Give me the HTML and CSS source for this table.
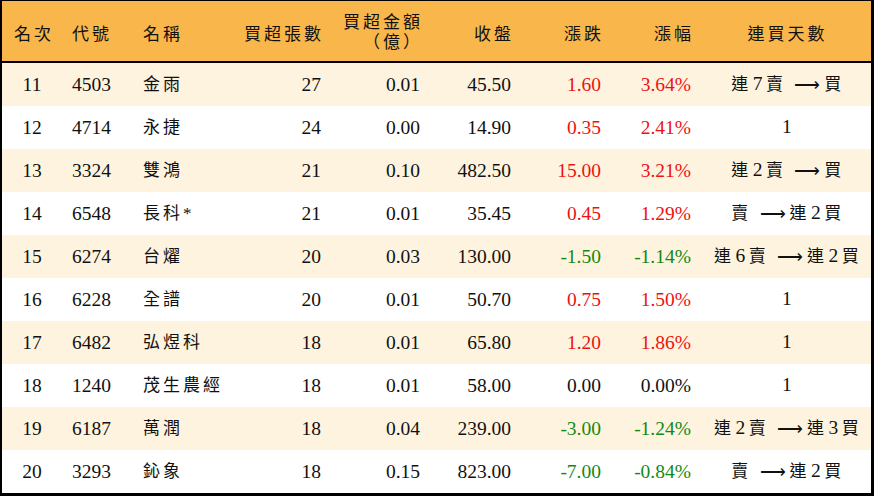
FILE: index.html
```html
<!DOCTYPE html>
<html lang="zh-Hant">
<head>
<meta charset="utf-8">
<title>買超排行</title>
<link rel="stylesheet" href="styles.css">
</head>
<body>
<div class="board">
  <table class="rank">
    <colgroup>
      <col class="w-rank"><col class="w-code"><col class="w-name"><col class="w-vol"><col class="w-amt">
      <col class="w-close"><col class="w-chg"><col class="w-pct"><col class="w-streak">
    </colgroup>
    <thead>
      <tr>
        <th class="h-rank">名次</th>
        <th class="h-left">代號</th>
        <th class="h-left h-name">名稱</th>
        <th class="h-num">買超張數</th>
        <th class="h-num h-two"><span class="ln">買超金額</span><span class="ln">（億）</span></th>
        <th class="h-num">收盤</th>
        <th class="h-num">漲跌</th>
        <th class="h-num">漲幅</th>
        <th class="h-streak">連買天數</th>
      </tr>
    </thead>
    <tbody>
      <tr class="alt"><td class="c-rank">11</td><td class="c-code">4503</td><td class="c-name">金雨</td><td class="c-num">27</td><td class="c-num">0.01</td><td class="c-num">45.50</td><td class="c-num up">1.60</td><td class="c-num up">3.64%</td><td class="c-streak">連<span class="d">7</span>賣 <span class="arr">⟶</span>買</td></tr>
      <tr><td class="c-rank">12</td><td class="c-code">4714</td><td class="c-name">永捷</td><td class="c-num">24</td><td class="c-num">0.00</td><td class="c-num">14.90</td><td class="c-num up">0.35</td><td class="c-num up">2.41%</td><td class="c-streak"><span class="d">1</span></td></tr>
      <tr class="alt"><td class="c-rank">13</td><td class="c-code">3324</td><td class="c-name">雙鴻</td><td class="c-num">21</td><td class="c-num">0.10</td><td class="c-num">482.50</td><td class="c-num up">15.00</td><td class="c-num up">3.21%</td><td class="c-streak">連<span class="d">2</span>賣 <span class="arr">⟶</span>買</td></tr>
      <tr><td class="c-rank">14</td><td class="c-code">6548</td><td class="c-name">長科*</td><td class="c-num">21</td><td class="c-num">0.01</td><td class="c-num">35.45</td><td class="c-num up">0.45</td><td class="c-num up">1.29%</td><td class="c-streak">賣 <span class="arr">⟶</span>連<span class="d">2</span>買</td></tr>
      <tr class="alt"><td class="c-rank">15</td><td class="c-code">6274</td><td class="c-name">台燿</td><td class="c-num">20</td><td class="c-num">0.03</td><td class="c-num">130.00</td><td class="c-num down">-1.50</td><td class="c-num down">-1.14%</td><td class="c-streak">連<span class="d">6</span>賣 <span class="arr">⟶</span>連<span class="d">2</span>買</td></tr>
      <tr><td class="c-rank">16</td><td class="c-code">6228</td><td class="c-name">全譜</td><td class="c-num">20</td><td class="c-num">0.01</td><td class="c-num">50.70</td><td class="c-num up">0.75</td><td class="c-num up">1.50%</td><td class="c-streak"><span class="d">1</span></td></tr>
      <tr class="alt"><td class="c-rank">17</td><td class="c-code">6482</td><td class="c-name">弘煜科</td><td class="c-num">18</td><td class="c-num">0.01</td><td class="c-num">65.80</td><td class="c-num up">1.20</td><td class="c-num up">1.86%</td><td class="c-streak"><span class="d">1</span></td></tr>
      <tr><td class="c-rank">18</td><td class="c-code">1240</td><td class="c-name">茂生農經</td><td class="c-num">18</td><td class="c-num">0.01</td><td class="c-num">58.00</td><td class="c-num">0.00</td><td class="c-num">0.00%</td><td class="c-streak"><span class="d">1</span></td></tr>
      <tr class="alt"><td class="c-rank">19</td><td class="c-code">6187</td><td class="c-name">萬潤</td><td class="c-num">18</td><td class="c-num">0.04</td><td class="c-num">239.00</td><td class="c-num down">-3.00</td><td class="c-num down">-1.24%</td><td class="c-streak">連<span class="d">2</span>賣 <span class="arr">⟶</span>連<span class="d">3</span>買</td></tr>
      <tr><td class="c-rank">20</td><td class="c-code">3293</td><td class="c-name">鈊象</td><td class="c-num">18</td><td class="c-num">0.15</td><td class="c-num">823.00</td><td class="c-num down">-7.00</td><td class="c-num down">-0.84%</td><td class="c-streak">賣 <span class="arr">⟶</span>連<span class="d">2</span>買</td></tr>
    </tbody>
  </table>
</div>
</body>
</html>
```

FILE: styles.css
```css
html, body {
  margin: 0;
  padding: 0;
  background: #ffffff;
}

.board {
  width: 874px;
  height: 496px;
  box-sizing: border-box;
  border-style: solid;
  border-color: #000000;
  border-width: 1px 3px 3px 2px;
  background: #ffffff;
}

.rank {
  width: 100%;
  table-layout: fixed;
  border-collapse: separate;
  border-spacing: 0;
  font-family: "Liberation Serif", "Noto Sans CJK TC", serif;
  color: #111111;
}

.w-rank { width: 60px; }
.w-code { width: 70px; }
.w-name { width: 100px; }
.w-vol { width: 99px; }
.w-amt { width: 99px; }
.w-close { width: 91px; }
.w-chg { width: 90px; }
.w-pct { width: 90px; }
.w-streak { width: 170px; }

.rank th {
  box-sizing: border-box;
  height: 62px;
  padding: 2px 0 0 0;
  background: #f9b64a;
  border-bottom: 2px solid #000000;
  font-family: "Noto Sans CJK TC", sans-serif;
  font-weight: normal;
  font-size: 17px;
  letter-spacing: 3px;
  line-height: 21px;
  vertical-align: middle;
  white-space: nowrap;
}

.h-rank { text-align: left; padding-left: 12px !important; }
.h-left { text-align: left; padding-left: 10px !important; }
.h-name { padding-left: 11px !important; }
.h-num { text-align: right; padding-right: 7px !important; }
.h-two { padding-top: 0 !important; }
.h-two .ln {
  display: block;
  height: 20px;
  line-height: 20px;
}
.h-streak { text-align: center; padding-left: 3px !important; }

.rank td {
  box-sizing: border-box;
  height: 43px;
  padding: 0;
  font-size: 19.5px;
  line-height: 24px;
  vertical-align: middle;
  white-space: nowrap;
}

.rank tr.alt td {
  background: #fef3df;
}

.c-rank { text-align: center; }
.c-code { text-align: left; padding-left: 10px !important; }
.c-name {
  text-align: left;
  padding-left: 11px !important;
  font-size: 17px !important;
  letter-spacing: 3px;
}
.c-num { text-align: right; padding-right: 10px !important; }
.c-streak {
  text-align: center;
  font-size: 17px !important;
  letter-spacing: 3.5px;
  padding-left: 4px !important;
}

.d {
  font-size: 19.5px;
  padding-left: 1px;
}

.arr {
  font-family: "DejaVu Sans", sans-serif;
  font-size: 18px;
  font-weight: 300;
  line-height: 0;
  letter-spacing: 4px;
  vertical-align: -1px;
}

.up { color: #ee1111; }
.down { color: #128a12; }
```
